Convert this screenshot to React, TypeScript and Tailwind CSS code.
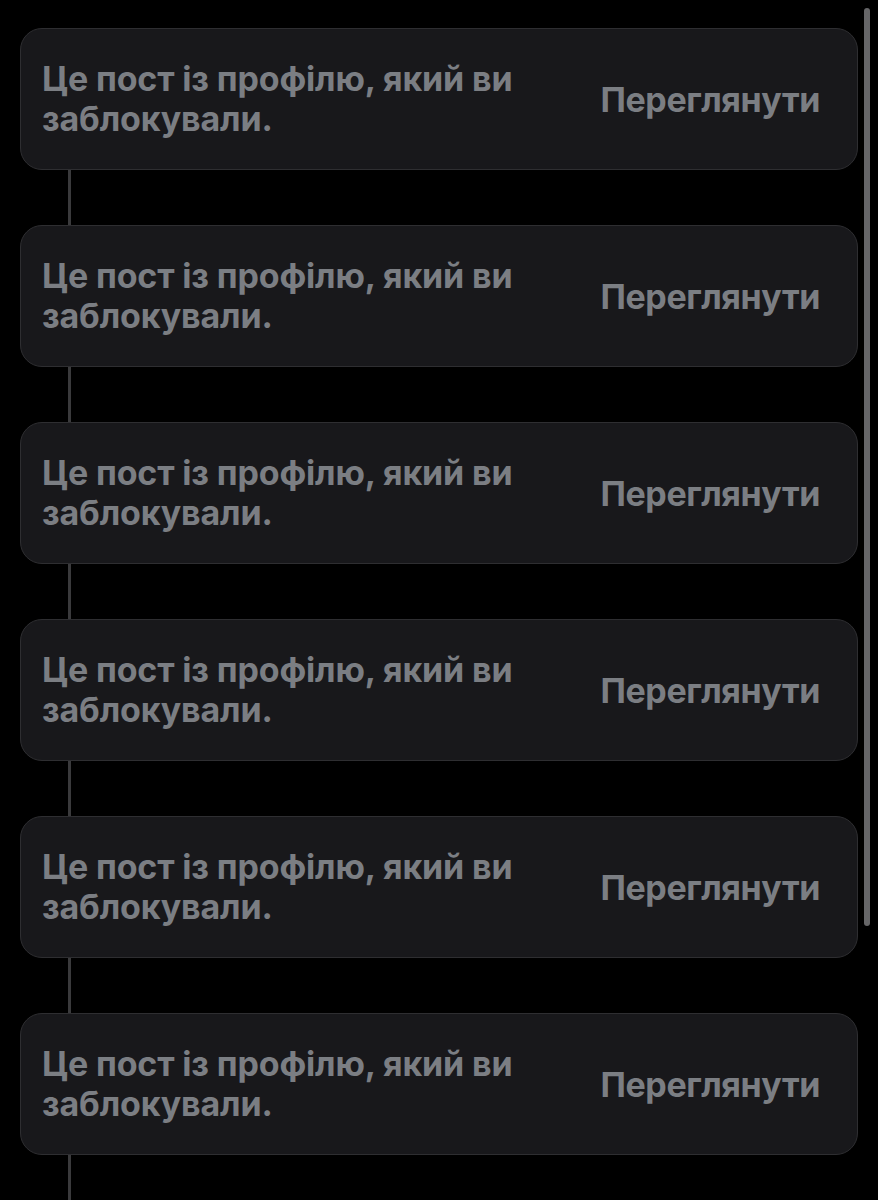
import React from 'react';

const BlockedCard: React.FC = () => (
  <div className="flex h-[142px] items-center justify-between rounded-[22px] border border-[#2e2e31] bg-[#18181b] pl-[21px] pr-[37px]">
    <p className="w-[520px] text-[34px] leading-[40px] font-bold tracking-[-0.15px] text-[#7b7e83]">
      Це пост із профілю, який ви заблокували.
    </p>
    <span className="pt-[2px] text-[34px] leading-[40px] font-bold tracking-[-0.4px] text-[#7b7e83]">
      Переглянути
    </span>
  </div>
);

export default function App() {
  const items = [1, 2, 3, 4, 5, 6];

  return (
    <div
      className="relative h-[1200px] w-[878px] overflow-hidden bg-black"
      style={{ fontFamily: 'Inter, "Noto Sans", sans-serif' }}
    >
      <div className="flex w-[858px] flex-col pt-[28px] pl-[20px]">
        {items.map((i) => (
          <React.Fragment key={i}>
            <BlockedCard />
            <div className="ml-[48px] h-[55px] w-[3px] bg-[#3a3a3c]" />
          </React.Fragment>
        ))}
      </div>

      {/* scrollbar */}
      <div className="absolute top-[8px] left-[864px] h-[918px] w-[6px] rounded-full bg-[#666668]" />
    </div>
  );
}
